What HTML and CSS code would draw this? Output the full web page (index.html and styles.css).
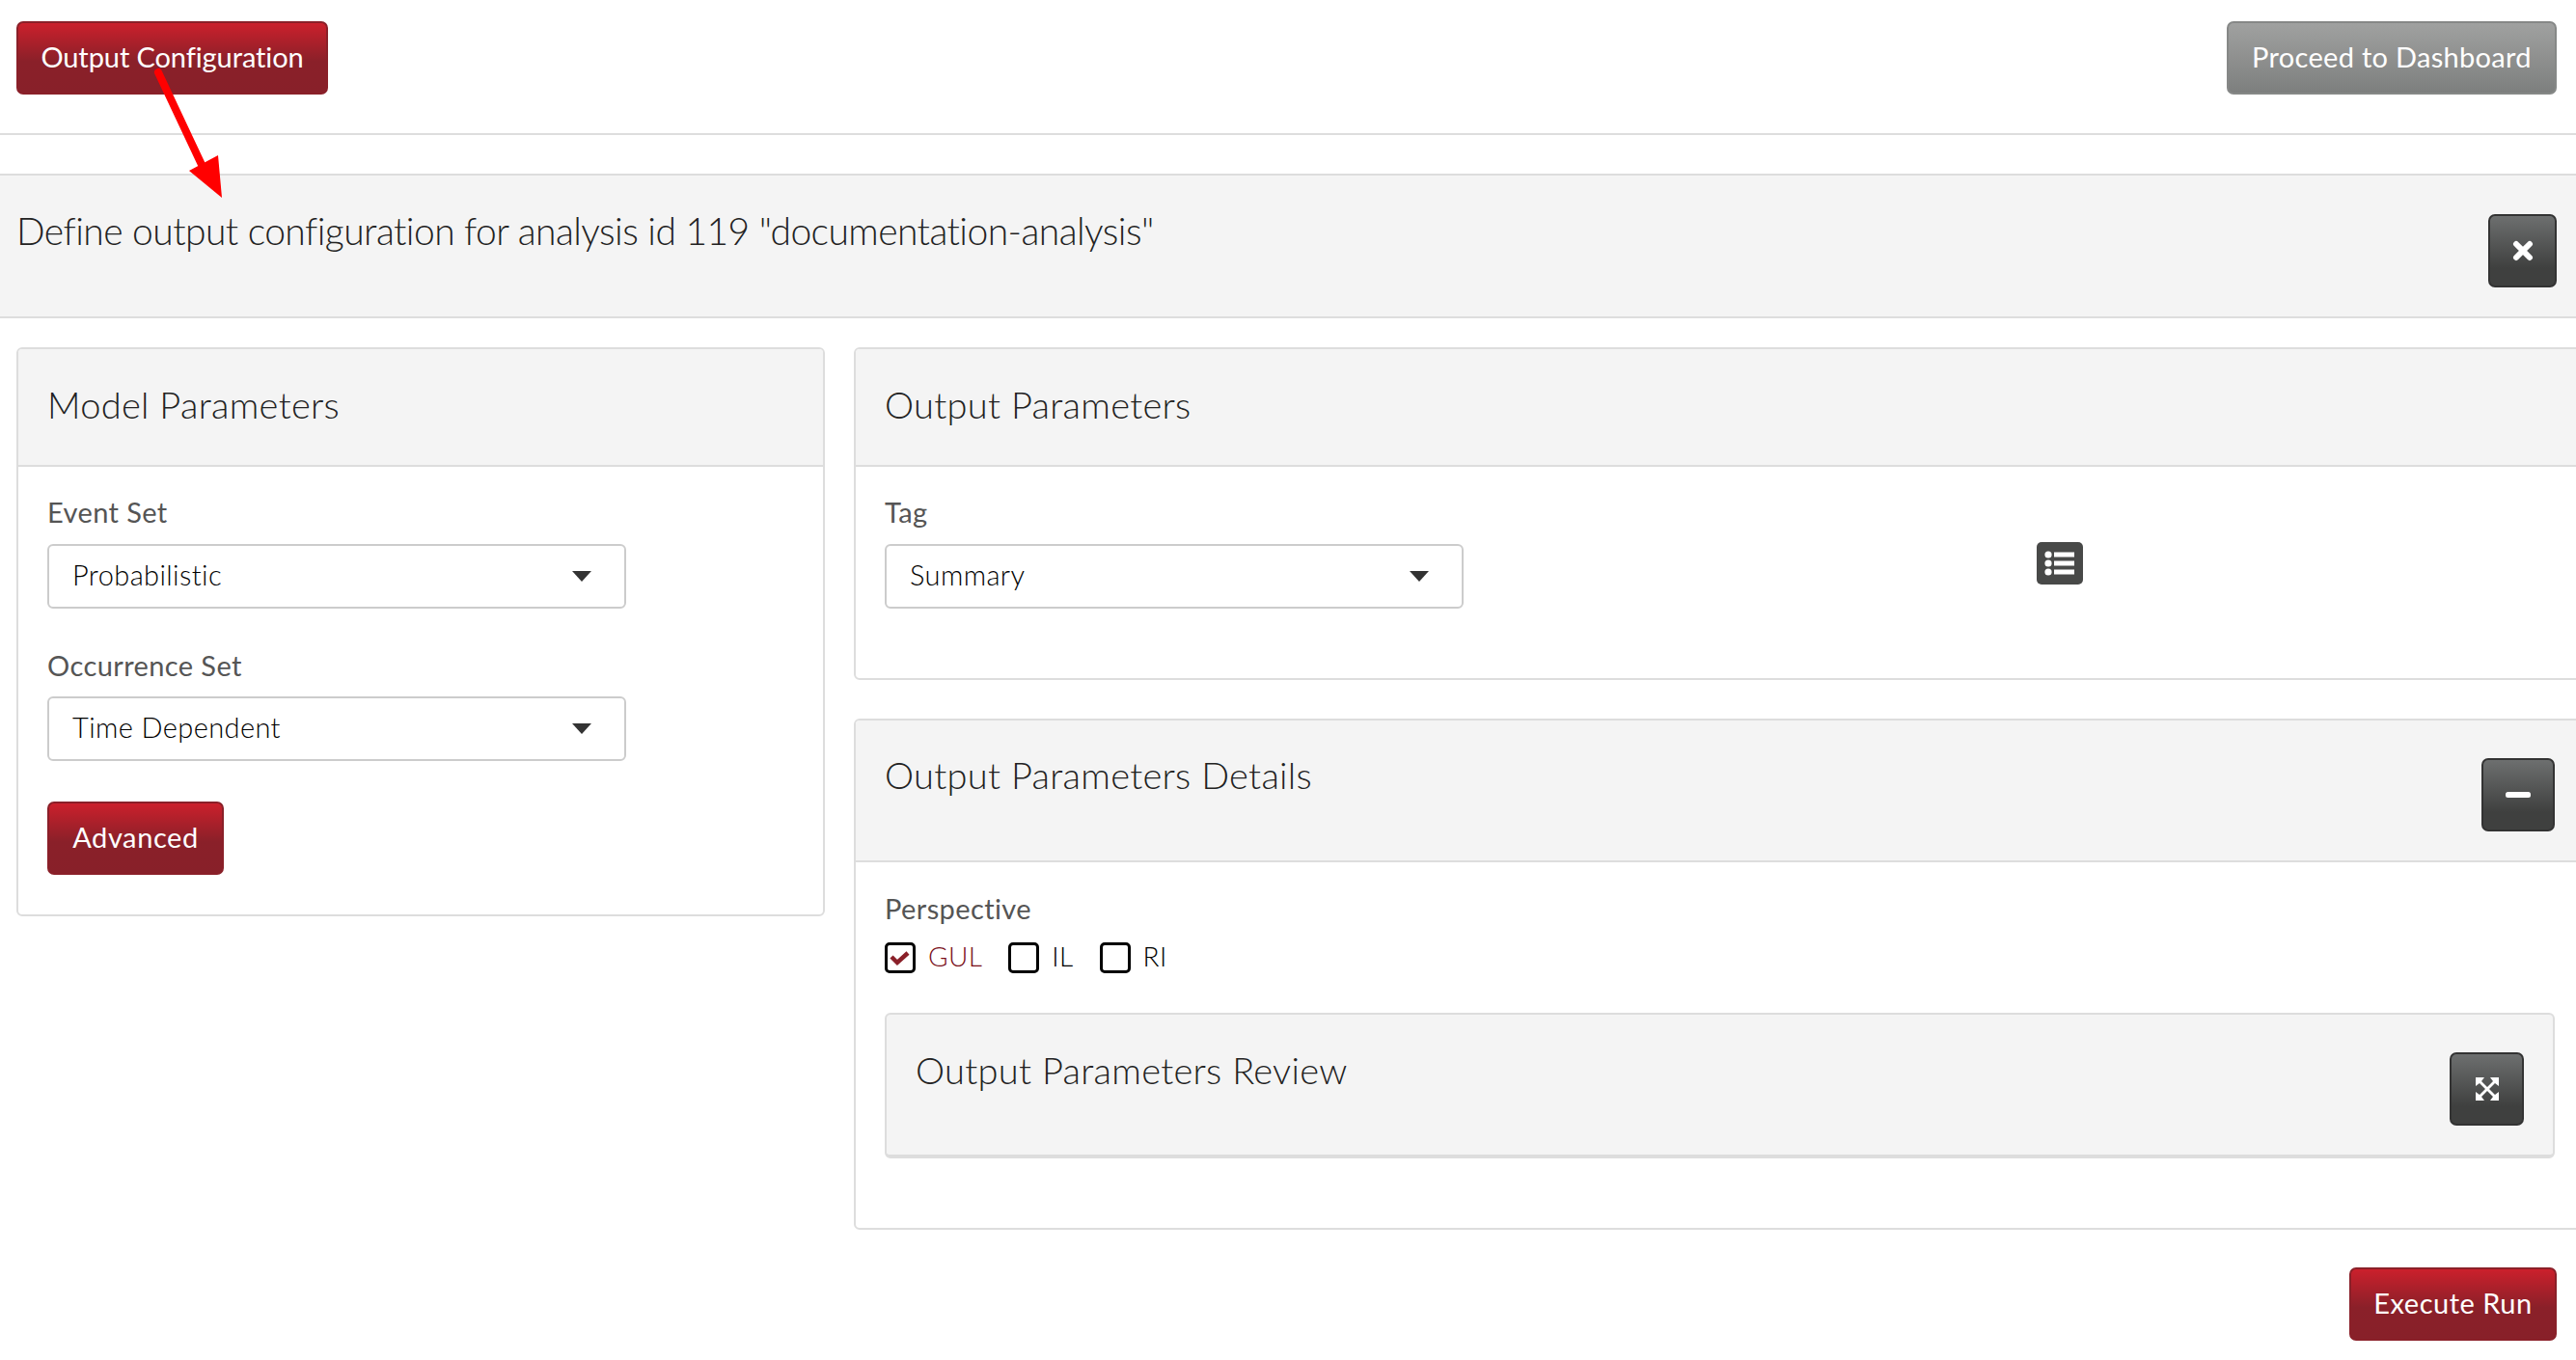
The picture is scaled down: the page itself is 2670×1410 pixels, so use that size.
FILE: index.html
```html
<!DOCTYPE html>
<html lang="en">
<head>
    <meta charset="UTF-8">
    <meta name="viewport" content="width=device-width, initial-scale=1.0">
    <title>Output Configuration</title>
    <link rel="stylesheet" href="styles.css">
</head>
<body>
    <header class="topbar">
        <button class="btn btn-red btn-output">Output Configuration</button>
        <button class="btn btn-gray btn-proceed">Proceed to Dashboard</button>
    </header>

    <!-- annotation arrow over the page -->
    <svg class="arrow" width="240" height="210" viewBox="0 0 240 210">
        <line x1="164" y1="75" x2="211" y2="175" stroke="#ff0000" stroke-width="8" stroke-linecap="round"/>
        <polygon points="230,205 196,177 226,161" fill="#ff0000"/>
    </svg>

    <section class="title-band">
        <h1>Define output configuration for analysis id 119 "documentation-analysis"</h1>
        <button class="btn btn-dark btn-icon">
            <svg width="22" height="22" viewBox="0 0 22 22"><path d="M4 4 18 18M18 4 4 18" stroke="#fff" stroke-width="6" stroke-linecap="round"/></svg>
        </button>
    </section>

    <main class="content">
        <section class="panel panel-model">
            <div class="panel-heading"><h2>Model Parameters</h2></div>
            <div class="panel-body">
                <label class="field-label">Event Set</label>
                <div class="select"><span>Probabilistic</span><span class="caret"></span></div>
                <label class="field-label second">Occurrence Set</label>
                <div class="select"><span>Time Dependent</span><span class="caret"></span></div>
                <button class="btn btn-red btn-advanced">Advanced</button>
            </div>
        </section>

        <div class="right-col">
            <section class="panel panel-output">
                <div class="panel-heading"><h2>Output Parameters</h2></div>
                <div class="panel-body tag-row">
                    <div class="tag-field">
                        <label class="field-label">Tag</label>
                        <div class="select"><span>Summary</span><span class="caret"></span></div>
                    </div>
                    <svg class="list-icon" width="48" height="44" viewBox="0 0 48 44">
                        <rect width="48" height="44" rx="5" fill="#484948"/>
                        <circle cx="12" cy="13" r="3.6" fill="#fff"/>
                        <circle cx="12" cy="22" r="3.6" fill="#fff"/>
                        <circle cx="12" cy="31" r="3.6" fill="#fff"/>
                        <rect x="18" y="10.5" width="21" height="5" fill="#fff"/>
                        <rect x="18" y="19.5" width="21" height="5" fill="#fff"/>
                        <rect x="18" y="28.5" width="21" height="5" fill="#fff"/>
                    </svg>
                </div>
            </section>

            <section class="panel panel-details">
                <div class="panel-heading heading-tall">
                    <h2>Output Parameters Details</h2>
                    <button class="btn btn-dark btn-icon btn-minus">
                        <svg width="26" height="6" viewBox="0 0 26 6"><rect width="26" height="6" rx="2.5" fill="#fff"/></svg>
                    </button>
                </div>
                <div class="panel-body details-body">
                    <label class="field-label">Perspective</label>
                    <div class="checks">
                        <label class="check check-on">
                            <span class="box">
                                <svg width="22" height="18" viewBox="0 0 22 18"><path d="M2 8 8 14 19 4" fill="none" stroke="#8a2029" stroke-width="4.5"/></svg>
                            </span>GUL
                        </label>
                        <label class="check"><span class="box"></span>IL</label>
                        <label class="check"><span class="box"></span>RI</label>
                    </div>
                    <div class="review">
                        <h2>Output Parameters Review</h2>
                        <button class="btn btn-dark btn-icon btn-expand">
                            <svg width="26" height="26" viewBox="0 0 26 26">
                                <path d="M1 1H10L7 5 13 11 19 5 16 1H25V10L21 7 15 13 21 19 25 16V25H16L19 21 13 15 7 21 10 25H1V16L5 19 11 13 5 7 1 10Z" fill="#fff"/>
                            </svg>
                        </button>
                    </div>
                </div>
            </section>
        </div>
    </main>

    <div class="run-row">
        <button class="btn btn-red btn-run">Execute Run</button>
    </div>
</body>
</html>
```

FILE: styles.css
```css
* {
    box-sizing: border-box;
}

body {
    font-family: 'Lato', 'Open Sans', sans-serif;
    color: #333;
    background-color: #fff;
    margin: 0;
    width: 2670px;
    height: 1410px;
    overflow: hidden;
    position: relative;
}

h1, h2 {
    font-weight: 300;
    margin: 0;
}

/* buttons */
.btn {
    display: inline-flex;
    align-items: center;
    justify-content: center;
    height: 76px;
    padding: 0 0 3px;
    border-radius: 7px;
    font-family: inherit;
    font-size: 29px;
    letter-spacing: 0.3px;
    color: #fff;
    cursor: pointer;
}

.btn-red {
    background: linear-gradient(to bottom, #cb202c 0%, #8a2029 55%, #882029 100%);
    border: 2px solid #8a2029;
}

.btn-gray {
    background: linear-gradient(to bottom, #a0a1a0 0%, #7d7f7e 100%);
    border: 2px solid #868887;
}

.btn-dark {
    background: linear-gradient(to bottom, #6d6f6f 0%, #3f403f 75%);
    border: 2px solid #333;
    padding: 0;
}

.btn-output {
    width: 323px;
    letter-spacing: -0.1px;
}

.btn-proceed {
    width: 342px;
}

.btn-icon {
    width: 71px;
}

/* top bar */
.topbar {
    display: flex;
    justify-content: space-between;
    height: 140px;
    padding: 22px 20px 0 17px;
    border-bottom: 2px solid #ddd;
}

.arrow {
    position: absolute;
    left: 0;
    top: 0;
}

.title-band {
    display: flex;
    justify-content: space-between;
    align-items: flex-start;
    height: 150px;
    margin-top: 40px;
    padding: 40px 20px 0 17px;
    background-color: #f4f4f4;
    border-top: 2px solid #ddd;
    border-bottom: 2px solid #ddd;
}

.title-band h1 {
    font-size: 39px;
    line-height: 44px;
    letter-spacing: -0.55px;
    margin-top: -5px;
    color: #222;
}

/* main layout */
.content {
    display: grid;
    grid-template-columns: 838px 1795px;
    column-gap: 30px;
    align-items: start;
    margin: 30px 0 0 17px;
}

.panel {
    border: 2px solid #ddd;
    border-radius: 6px;
    background-color: #fff;
}

.panel-heading {
    display: flex;
    justify-content: space-between;
    align-items: flex-start;
    height: 122px;
    padding: 35px 30px 0;
    background-color: #f4f4f4;
    border-bottom: 2px solid #ddd;
    border-radius: 4px 4px 0 0;
}

.panel-heading h2,
.review h2 {
    font-size: 38px;
    line-height: 44px;
    letter-spacing: 0.3px;
    color: #222;
}

.heading-tall {
    height: 147px;
    padding-top: 34px;
}

.btn-minus {
    width: 76px;
    margin-top: 5px;
}

.panel-body {
    padding: 27px 30px 41px;
}

.field-label {
    display: block;
    font-size: 29px;
    line-height: 40px;
    letter-spacing: 0.4px;
    color: #555;
    margin-bottom: 13px;
}

.field-label.second {
    margin-top: 39px;
    margin-bottom: 12px;
}

.select {
    display: flex;
    justify-content: space-between;
    align-items: center;
    width: 600px;
    height: 67px;
    padding: 0 34px 4px 24px;
    border: 2px solid #ccc;
    border-radius: 6px;
    font-size: 29px;
    font-weight: 300;
    letter-spacing: 0.4px;
    color: #000;
    background-color: #fff;
}

.caret {
    width: 0;
    height: 0;
    margin-top: 4px;
    border-left: 10px solid transparent;
    border-right: 10px solid transparent;
    border-top: 11px solid #333;
}

.btn-advanced {
    width: 183px;
    margin-top: 42px;
    letter-spacing: 0.6px;
}

.panel-output {
    height: 345px;
}

.tag-row {
    display: flex;
    align-items: flex-start;
}

.list-icon {
    margin: 51px 0 0 594px;
}

.panel-details {
    margin-top: 40px;
    height: 530px;
}

.details-body {
    padding: 28px 30px 0;
}

.details-body .field-label {
    margin-bottom: 15px;
}

.checks {
    display: flex;
    gap: 27px;
}

.check {
    display: flex;
    align-items: flex-start;
    gap: 13px;
    font-size: 28px;
    font-weight: 300;
    line-height: 28px;
    letter-spacing: 0.4px;
    color: #000;
}

.check-on {
    color: #7a0f1a;
}

.box {
    display: flex;
    align-items: center;
    justify-content: center;
    width: 32px;
    height: 32px;
    border: 3px solid #000;
    border-radius: 5px;
}

.review {
    display: flex;
    justify-content: space-between;
    align-items: flex-start;
    height: 151px;
    margin-top: 41px;
    padding: 35px 30px 0;
    background-color: #f4f4f4;
    border: 2px solid #ddd;
    border-bottom-width: 4px;
    border-radius: 6px;
}

.btn-expand {
    width: 77px;
    margin-top: 4px;
}

.run-row {
    display: flex;
    justify-content: flex-end;
    margin: 39px 20px 0 0;
}

.btn-run {
    width: 215px;
    letter-spacing: 0.5px;
}
```
